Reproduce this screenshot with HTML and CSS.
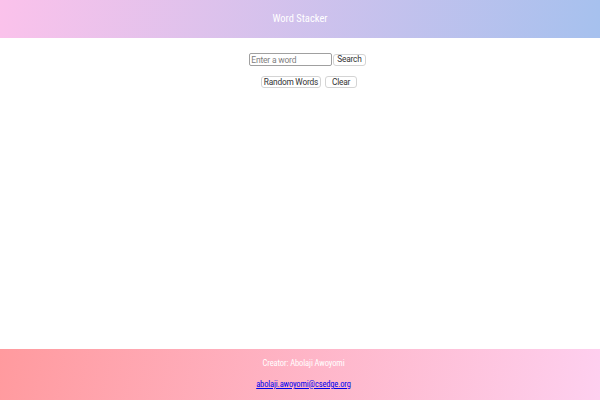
FILE: index.html
```html
<!DOCTYPE html>
<html lang="en">
<head>
<meta charset="utf-8">
<title>Word Stacker</title>
<link rel="stylesheet" href="styles.css">
</head>
<body>
<header class="site-header">
  <h1 class="title">Word Stacker</h1>
</header>
<main class="content">
  <div class="row search-row">
    <input class="word-input" type="text" placeholder="Enter a word">
    <button class="btn">Search</button>
  </div>
  <div class="row actions-row">
    <button class="btn btn-random">Random Words</button>
    <button class="btn btn-clear">Clear</button>
  </div>
</main>
<footer class="site-footer">
  <p class="creator">Creator: Abolaji Awoyomi</p>
  <a class="email" href="mailto:abolaji.awoyomi@csedge.org">abolaji.awoyomi@csedge.org</a>
</footer>
</body>
</html>
```
FILE: styles.css
```css
html, body {
  margin: 0;
  padding: 0;
  height: 100%;
}
body {
  display: flex;
  flex-direction: column;
  min-height: 100vh;
  font-family: Roboto, "Liberation Sans", sans-serif;
  background: #fff;
}
.site-header {
  height: 38px;
  box-sizing: border-box;
  padding-bottom: 2px;
  display: flex;
  align-items: center;
  justify-content: center;
  background: linear-gradient(100deg, #fbc2eb 0%, #a6c1ee 100%);
}
.title {
  margin: 0;
  font-size: 10.5px;
  font-stretch: 76%;
  font-weight: 400;
  color: #fff;
}
.content {
  flex: 1;
  display: flex;
  flex-direction: column;
  align-items: center;
  padding-top: 15px;
  padding-left: 15px;
  gap: 10px;
}
.row {
  display: flex;
  align-items: center;
  gap: 1px;
}
.actions-row {
  gap: 4px;
  padding-left: 3px;
}
.word-input {
  box-sizing: border-box;
  width: 83px;
  height: 13px;
  padding: 0 1px;
  font-family: inherit;
  font-size: 8.5px;
  letter-spacing: -0.2px;
  border: 1px solid #a0a0a0;
  border-radius: 2px;
  outline: none;
}
.word-input::placeholder {
  color: #808080;
}
.btn {
  box-sizing: border-box;
  height: 12px;
  padding: 0 3px;
  font-family: inherit;
  font-size: 8.3px;
  font-weight: 400;
  letter-spacing: -0.2px;
  line-height: 1;
  color: #333;
  background: #fff;
  border: 1px solid #d4d4d4;
  border-radius: 3px;
}
.btn-random {
  padding: 0 2px;
}
.btn-clear {
  padding: 0 6px;
}
.site-footer {
  height: 51px;
  box-sizing: border-box;
  display: flex;
  flex-direction: column;
  align-items: center;
  padding-top: 9px;
  padding-left: 7px;
  gap: 11px;
  background: linear-gradient(100deg, #ff9a9e 0%, #fecfef 100%);
}
.creator {
  margin: 0;
  font-size: 8.5px;
  font-stretch: 78%;
  letter-spacing: -0.1px;
  color: #fff;
}
.email {
  font-size: 8.5px;
  font-stretch: 78%;
  letter-spacing: -0.15px;
  color: #0000ee;
}
```
